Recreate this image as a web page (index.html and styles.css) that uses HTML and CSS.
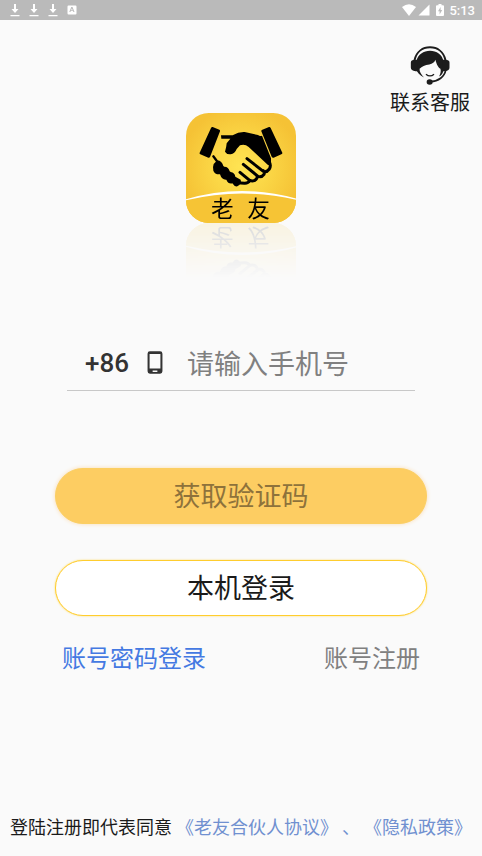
FILE: index.html
```html
<!DOCTYPE html>
<html lang="zh-CN">
<head>
<meta charset="utf-8">
<meta name="viewport" content="width=device-width, initial-scale=1">
<title>老友</title>
<link rel="stylesheet" href="styles.css">
</head>
<body>
<header class="status">
  <div class="status-left">
    <svg class="dl" viewBox="0 0 10 14" aria-hidden="true"><path d="M4 1h2v5h2.500L5 10 1.500 6H4zM.5 12h9v1.200h-9z"/></svg>
    <svg class="dl" viewBox="0 0 10 14" aria-hidden="true"><path d="M4 1h2v5h2.500L5 10 1.500 6H4zM.5 12h9v1.200h-9z"/></svg>
    <svg class="dl" viewBox="0 0 10 14" aria-hidden="true"><path d="M4 1h2v5h2.500L5 10 1.500 6H4zM.5 12h9v1.200h-9z"/></svg>
    <svg class="dl" viewBox="0 0 10 14" aria-hidden="true"><path fill-rule="evenodd" d="M1.500 2.500h7a1 1 0 0 1 1 1v7a1 1 0 0 1-1 1h-7a1 1 0 0 1-1-1v-7a1 1 0 0 1 1-1zM4.300 4 2.300 9h1.100l.4-1.200h2.200L6.400 9h1.100l-2-5zm.6 1.200.7 1.800H4.200z"/></svg>
  </div>
  <div class="status-right">
    <svg class="wifi" viewBox="0 0 14 12" aria-hidden="true"><path d="M0 3Q7-2.500 14 3L7 12z"/></svg>
    <svg class="signal" viewBox="0 0 12 12" aria-hidden="true"><path d="M11.500.5v11H.5z"/></svg>
    <svg class="battery" viewBox="0 0 8 12" aria-hidden="true"><path fill-rule="evenodd" d="M2.500 0h3v1.300H7q1 0 1 1V11q0 1-1 1H1q-1 0-1-1V2.300q0-1 1-1h1.500zM4.600 3 2 7.300h1.600V10.500L6.200 6H4.600z"/></svg>
    <span>5:13</span>
  </div>
</header>
<main class="page">
  <a class="service" href="#service">
    <svg class="service-icon" viewBox="0 0 118 116" aria-hidden="true">
      <path d="M13 42C19 16 38 4 59 4s40 12 46 38" fill="none" stroke="#1c1c1c" stroke-width="6"/>
      <path d="M19 44C23 25 40 14 59 14s37 12 40 31v24c0 10-5 18-13 22 5-9 6-16 4-23-7-5-11-12-15-27-2 8-9 12-18 14-13 2-22 5-29 13-1 9 5 17 13 26C29 88 20 79 18 68z" fill="#1c1c1c"/>
      <path d="M14 41h9v34h-7q-14-1-14-11V49q0-8 12-8zM95 41h9q13 0 13 8v15q0 10-13 11h-9z" fill="#1c1c1c"/>
      <path d="M106 71C102 92 84 105 61 106" fill="none" stroke="#1c1c1c" stroke-width="5"/>
      <ellipse cx="58" cy="107" rx="9" ry="8" fill="#1c1c1c"/>
      <path d="M47 84q12 10 24 0" fill="none" stroke="#1c1c1c" stroke-width="4"/>
    </svg>
    <span>联系客服</span>
  </a>
  <svg class="logo" viewBox="30 29 330 330" role="img" aria-label="老友">
    <defs>
      <radialGradient id="gold" cx="50%" cy="49%" r="55%">
        <stop offset="0" stop-color="#ffe453"/><stop offset=".45" stop-color="#fbd746"/><stop offset="1" stop-color="#f5c235"/>
      </radialGradient>
      <clipPath id="tile"><rect x="30" y="29" width="330" height="330" rx="68"/></clipPath>
    </defs>
    <g clip-path="url(#tile)">
      <rect x="30" y="29" width="330" height="330" fill="url(#gold)"/>
      <path d="M28 291Q195 246 362 289V360H28z" fill="#f6c435"/>
      <path d="M26 289Q195 238 364 287V290Q195 250 26 292z" fill="#fff"/>
    </g>
    <path d="M110 71l20 8q3 2 2 5l-30 77q-2 3-5 2l-24-10q-3-2-2-5l34-74q2-4 5-3zM279 71l-20 8q-4 2-3 5l31 76q2 4 6 3l23-10q4-2 3-5l-35-74q-2-4-5-3z"/>
    <path d="M135 96H170Q188 85 206 86L246 95Q252 100 258 97L285 165V188L275 184 218 131Q206 120 192 126L182 137Q176 152 164 153 152 154 147 145 151 133 152 120L163 106H136z"/>
    <g fill="none" stroke="#000" stroke-linecap="round" stroke-linejoin="round">
      <path d="M213 166L262 204Q272 208 280 197 286 186 280 176M202 183L246 219Q257 223 264 213 267 206 262 202M192 207L221 231Q232 236 240 228 246 222 242 216M184 238L205 240Q216 241 222 231" stroke-width="9"/>
      <path d="M112 159L122 172" stroke-width="7"/>
    </g>
    <path d="M113 182L124 171Q138 173 142 188L145 190Q158 190 161 204L164 206Q176 208 178 220L194 229Q198 240 184 249 176 251 169 240 157 243 151 229 137 230 132 213 116 214 112 202 109 193 113 182z"/>
    <text class="logo-text" x="105" y="341">老</text>
    <text class="logo-text" x="214" y="341">友</text>
  </svg>
  <form class="login">
    <div class="field">
      <label class="code" for="phone">+86</label>
      <svg class="phone-icon" viewBox="0 0 46 68" aria-hidden="true"><path fill-rule="evenodd" d="M8 1h30q7 0 7 7v52q0 7-7 7H8q-7 0-7-7V8q0-7 7-7zM7 9v43h32V9zM16 58v4h14v-4z" fill="#333"/></svg>
      <input id="phone" class="phone" type="tel" placeholder="请输入手机号">
    </div>
    <button class="btn btn-code" type="button">获取验证码</button>
    <button class="btn btn-local" type="button">本机登录</button>
    <nav class="links">
      <a class="blue" href="#password">账号密码登录</a>
      <a class="grey" href="#register">账号注册</a>
    </nav>
  </form>
  <footer class="terms">
    <span>登陆注册即代表同意</span>
    <a href="#agreement">《老友合伙人协议》</a>
    <span class="sep">、</span>
    <a href="#privacy">《隐私政策》</a>
  </footer>
</main>
</body>
</html>
```
FILE: styles.css
```css
* { box-sizing: border-box; }
body {
  margin: 0;
  min-height: 100vh;
  display: flex;
  flex-direction: column;
  background: #fafafa;
  color: #1a1a1a;
  font-family: Roboto, "Noto Sans CJK SC", sans-serif;
}
a { text-decoration: none; color: inherit; }
svg { display: block; }

.status {
  height: 20px;
  padding: 0 7px 0 10px;
  display: flex;
  justify-content: space-between;
  align-items: center;
  background: #bababa;
  color: #fff;
  font-size: 13px;
  font-weight: 500;
}
.status svg { fill: #fff; }
.status-left { display: flex; gap: 9px; }
.status-right { display: flex; align-items: center; gap: 2px; }
.status-right span { margin-left: 3px; }
.dl { width: 10px; height: 14px; }
.wifi { width: 14px; height: 12px; }
.signal { width: 12px; height: 12px; }
.battery { width: 8px; height: 12px; margin-left: 4px; }

.page {
  flex: 1;
  display: flex;
  flex-direction: column;
  align-items: center;
}
.service {
  align-self: flex-end;
  margin: 26px 12px 0 0;
  display: flex;
  flex-direction: column;
  align-items: center;
  gap: 4px;
  font-size: 20px;
  line-height: 28px;
}
.service-icon { width: 40px; height: 39px; }
.logo {
  width: 110px;
  height: 110px;
  margin-top: -4px;
  -webkit-box-reflect: below 0 linear-gradient(transparent 50%, rgba(0, 0, 0, 0.12));
}
.logo-text { font-size: 68px; font-weight: 400; }

.login {
  align-self: stretch;
  margin: 112px 55px 0;
  display: flex;
  flex-direction: column;
}
.field {
  height: 56px;
  margin: 0 12px 77px;
  padding-left: 18px;
  display: flex;
  align-items: center;
  border-bottom: 1px solid #c8c8c8;
}
.code { font-size: 26px; font-weight: 500; color: #333; }
.phone-icon { width: 16px; height: 23px; margin: 0 24px 0 18px; }
.phone {
  flex: 1;
  min-width: 0;
  padding: 4px 0 0;
  border: 0;
  outline: 0;
  background: none;
  font: inherit;
  font-size: 27px;
}
.phone::placeholder { color: #808080; opacity: 1; }
.btn {
  height: 56px;
  padding: 0 0 4px;
  border-radius: 28px;
  font: inherit;
  font-size: 27px;
}
.btn-code {
  border: 1px solid #fbcf62;
  background: #fdcd62;
  color: #8e723b;
  box-shadow: 0 0 4px #fbdcb0;
}
.btn-local {
  margin-top: 36px;
  border: 1px solid #ffcd2e;
  background: #fff;
  color: #1a1a1a;
  box-shadow: 0 0 2px #ffd95c;
}
.links {
  margin: 25px 7px 0;
  display: flex;
  justify-content: space-between;
  font-size: 24px;
  line-height: 36px;
}
.blue { color: #4479e2; }
.grey { color: #808080; }
.terms {
  margin: auto 0 14px;
  display: flex;
  gap: 4px;
  font-size: 18px;
  line-height: 28px;
  white-space: nowrap;
}
.terms a { color: #7090d0; }
.sep { color: #7090d0; }
```
